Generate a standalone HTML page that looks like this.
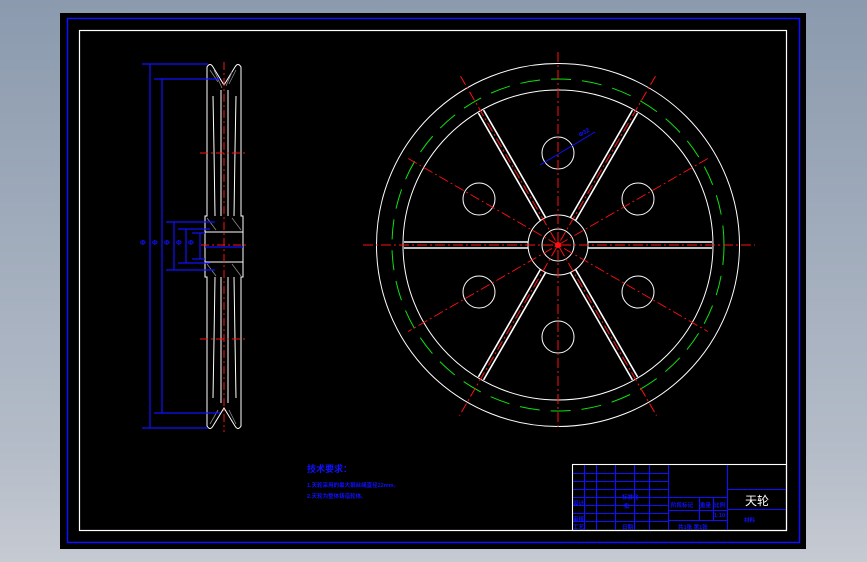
<!DOCTYPE html>
<html><head><meta charset="utf-8"><style>
html,body{margin:0;padding:0;}
body{width:867px;height:562px;overflow:hidden;background:linear-gradient(#8b9aae,#b4bcc8 80%,#c6cad2);font-family:"Liberation Sans","Noto Sans CJK SC",sans-serif;}
svg{position:absolute;left:0;top:0;}
</style></head><body>
<svg width="867" height="562" viewBox="0 0 867 562">
<rect x="60" y="13" width="746" height="536" fill="#000"/>
<rect x="67.5" y="18.5" width="732" height="524" fill="none" stroke="#1010ff" stroke-width="1.5"/>
<rect x="79.5" y="30.5" width="707" height="500" fill="none" stroke="#fff" stroke-width="1.2"/>

<!-- wheel front view -->
<g fill="none" stroke="#fff" stroke-width="1">
<circle cx="558" cy="245" r="181.5"/>
<circle cx="558" cy="245" r="155"/>
<circle cx="558" cy="245" r="30"/>
<circle cx="558" cy="245" r="16"/>
<circle cx="558" cy="153" r="16"/>
<circle cx="479" cy="199" r="16"/>
<circle cx="638" cy="199" r="16"/>
<circle cx="479" cy="292" r="16"/>
<circle cx="638" cy="292" r="16"/>
<circle cx="558" cy="337" r="16"/>
</g>
<circle cx="558" cy="245" r="166" fill="none" stroke="#10e010" stroke-width="1" stroke-dasharray="20,11"/>
<g stroke="#fff" stroke-width="1.6">
<line x1="404" y1="242" x2="528" y2="242"/><line x1="404" y1="248" x2="528" y2="248"/>
<line x1="588" y1="242" x2="712" y2="242"/><line x1="588" y1="248" x2="712" y2="248"/>
<g transform="rotate(60 558 245)"><line x1="404" y1="242" x2="528" y2="242"/><line x1="404" y1="248" x2="528" y2="248"/><line x1="588" y1="242" x2="712" y2="242"/><line x1="588" y1="248" x2="712" y2="248"/></g>
<g transform="rotate(120 558 245)"><line x1="404" y1="242" x2="528" y2="242"/><line x1="404" y1="248" x2="528" y2="248"/><line x1="588" y1="242" x2="712" y2="242"/><line x1="588" y1="248" x2="712" y2="248"/></g>
</g>
<g stroke="#ff1010" stroke-width="1" stroke-dasharray="10,3,2,3">
<line x1="363" y1="245" x2="755" y2="245"/>
<line x1="558" y1="52" x2="558" y2="430"/>
<g transform="rotate(60 558 245)"><line x1="363" y1="245" x2="755" y2="245"/></g>
<g transform="rotate(120 558 245)"><line x1="363" y1="245" x2="755" y2="245"/></g>
<g transform="rotate(30 558 245)"><line x1="385" y1="245" x2="731" y2="245"/></g>
<g transform="rotate(150 558 245)"><line x1="385" y1="245" x2="731" y2="245"/></g>
</g>
<circle cx="558" cy="245" r="3" fill="#ff1010"/>
<line x1="540" y1="165" x2="595" y2="132" stroke="#1010ff" stroke-width="1"/>
<text x="580" y="137" fill="#1010ff" font-size="6" font-weight="bold" transform="rotate(-30 580 137)">Φ32</text>

<!-- side view -->
<g fill="none" stroke="#fff" stroke-width="1">
<path d="M207 67 Q210 62 213 67 L224 85 L235 67 Q238 62 241 67 L241 216 L243 216 L243 277 L241 277 L241 426 Q238 431 235 426 L224 408 L213 426 Q210 431 207 426 L207 277 L205 277 L205 216 L207 216 Z"/>
<path d="M213 96 L214 150 L215 216 M236 96 L235 150 L234 216 M213 398 L214 340 L215 277 M236 398 L235 340 L234 277"/>
<path d="M221 90 L221 216 M228 90 L228 216 M221 277 L221 403 M228 277 L228 403"/>
<path d="M205 232 L243 232 M205 262 L243 262"/>
</g>
<g stroke="#888" stroke-width="0.8">
<path d="M210 70 L218 82 M214 70 L222 88 M232 72 L226 86 M236 70 L229 84 M207 218 L216 230 M232 218 L241 230 M207 264 L216 276 M232 264 L241 276 M210 424 L218 410 M236 424 L229 410"/>
</g>
<g stroke="#ff1010" stroke-width="1" stroke-dasharray="8,3,2,3">
<line x1="224" y1="62" x2="224" y2="432"/>
<line x1="200" y1="153" x2="248" y2="153"/>
<line x1="200" y1="339" x2="248" y2="339"/>
<line x1="201" y1="245" x2="248" y2="245"/>
</g>
<g stroke="#1010ff" stroke-width="1.2">
<line x1="142" y1="64" x2="208" y2="64"/><line x1="154" y1="79" x2="220" y2="79"/>
<line x1="142" y1="428" x2="208" y2="428"/><line x1="154" y1="413" x2="220" y2="413"/>
<line x1="150" y1="64" x2="150" y2="428"/><line x1="162" y1="79" x2="162" y2="413"/>
<line x1="166" y1="222" x2="215" y2="222"/><line x1="166" y1="270" x2="215" y2="270"/>
<line x1="174" y1="222" x2="174" y2="270"/>
<line x1="178" y1="229" x2="210" y2="229"/><line x1="178" y1="263" x2="210" y2="263"/>
<line x1="186" y1="229" x2="186" y2="263"/>
<line x1="192" y1="233" x2="205" y2="233"/><line x1="192" y1="259" x2="205" y2="259"/>
<line x1="200" y1="233" x2="200" y2="259"/>
<line x1="205" y1="247" x2="243" y2="247"/>
</g>
<g fill="#1010ff" font-size="7" font-weight="bold">
<text x="140" y="245">Φ</text><text x="152" y="245">Φ</text><text x="164" y="245">Φ</text><text x="176" y="245">Φ</text><text x="188" y="245">Φ</text>
</g>

<!-- tech notes -->
<g fill="#1010ff" font-family="'Liberation Sans','Noto Sans CJK SC',sans-serif" font-weight="bold">
<text x="307" y="472" font-size="9">技术要求：</text>
<text x="307" y="487" font-size="5.5">1.天轮采用的最大钢丝绳直径22mm。</text>
<text x="307" y="498" font-size="5.5">2.天轮为整体铸造轮体。</text>
</g>

<!-- title block -->
<g fill="none" stroke="#1010ff" stroke-width="1.1">
<line x1="584.5" y1="465" x2="584.5" y2="531"/>
<line x1="596.5" y1="465" x2="596.5" y2="531"/>
<line x1="615.5" y1="465" x2="615.5" y2="531"/>
<line x1="634.5" y1="465" x2="634.5" y2="531"/>
<line x1="649.5" y1="465" x2="649.5" y2="531"/>
<line x1="668.5" y1="465" x2="668.5" y2="531"/>
<line x1="727.5" y1="465" x2="727.5" y2="531"/>
<line x1="572" y1="473.5" x2="668" y2="473.5"/>
<line x1="572" y1="481.5" x2="668" y2="481.5"/>
<line x1="572" y1="489.5" x2="668" y2="489.5"/>
<line x1="572" y1="497.5" x2="727" y2="497.5"/>
<line x1="572" y1="505.5" x2="668" y2="505.5"/>
<line x1="572" y1="513.5" x2="668" y2="513.5"/>
<line x1="572" y1="521.5" x2="668" y2="521.5"/>
<line x1="668" y1="510.5" x2="727" y2="510.5"/>
<line x1="668" y1="520.5" x2="727" y2="520.5"/>
<line x1="727" y1="489.5" x2="787" y2="489.5"/>
<line x1="727" y1="509.5" x2="787" y2="509.5"/>
<line x1="699.5" y1="497" x2="699.5" y2="520"/>
<line x1="713.5" y1="497" x2="713.5" y2="520"/>
</g>
<rect x="572.5" y="464.5" width="214" height="66" fill="none" stroke="#fff" stroke-width="1.1"/>
<text x="745" y="505" fill="#fff" font-size="12" font-family="'Liberation Sans','Noto Sans CJK SC',sans-serif">天轮</text>
<g fill="#1010ff" font-size="5.5" font-weight="bold" font-family="'Liberation Sans','Noto Sans CJK SC',sans-serif">
<text x="573" y="505">设计</text><text x="573" y="521">审核</text><text x="573" y="529">工艺</text>
<text x="622" y="499">标准化</text><text x="624" y="508">批</text><text x="622" y="529">日期</text>
<text x="671" y="507">阶段标记</text><text x="700" y="507">重量</text><text x="714" y="507">比例</text>
<text x="714" y="517">1:10</text><text x="678" y="529">共1张 第1张</text>
<text x="744" y="522">材料</text>
</g>
</svg>
</body></html>
